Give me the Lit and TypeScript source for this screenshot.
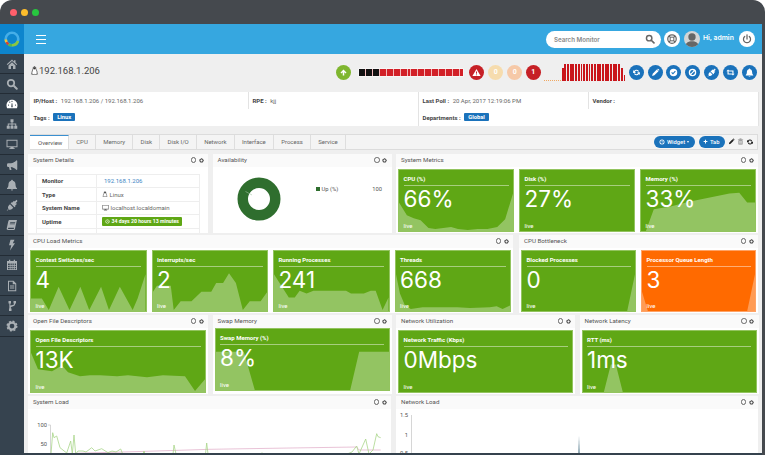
import { LitElement, html, css, svg } from 'lit';
import { customElement } from 'lit/decorators.js';

// Icons, all on a 24x24 box
const ICONS: Record<string, unknown> = {
  home: svg`<path d="M12 3 1.500 12.500 3 14l9-8 9 8 1.500-1.500-3.500-3.100V4.500h-3v2.300zM5 15v7h5v-6h4v6h5v-7l-7-6.300z"/>`,
  search: svg`<circle cx="10" cy="10" r="6.500" fill="none" stroke="currentColor" stroke-width="3.500"/><path d="M15 15l6.500 6.500" stroke="currentColor" stroke-width="4" stroke-linecap="round"/>`,
  gauge: svg`<path fill-rule="evenodd" d="M12 3.500C5.500 3.500 1 8.500 1 15c0 2 .5 3.800 1.300 5.500h19.400C22.500 18.800 23 17 23 15c0-6.500-4.500-11.500-11-11.500zM5 15.500a1.300 1.300 0 1 1 0-2.600 1.300 1.300 0 0 1 0 2.600zM7.500 9.500a1.300 1.300 0 1 1 0-2.600 1.300 1.300 0 0 1 0 2.600zM12 8a1.300 1.300 0 1 1 0-2.600A1.300 1.300 0 0 1 12 8zM19 15.500a1.300 1.300 0 1 1 0-2.600 1.300 1.300 0 0 1 0 2.600zM13.500 18.500h-3l.8-8h1.400z"/>`,
  sitemap: svg`<path d="M9 2.500h6v6h-2v2.500h7.500v4.500h2v6h-6v-6h2V13H13v2.500h2v6H9v-6h2V13H5.500v2.500h2v6h-6v-6h2V11H11V8.500H9z"/>`,
  desktop: svg`<path fill-rule="evenodd" d="M1 3.500h22v15h-8l.5 2h2v1.500h-11v-1.500h2l.5-2H1zM3 5.500v11h18v-11z"/>`,
  bullhorn: svg`<path d="M21 2.500c-3 3.500-7 5.500-11 6H4.500A2.500 2.500 0 0 0 2 11v2.500A2.500 2.500 0 0 0 4.500 16H6l1.500 6h3.500L9.500 16c4 .5 8.500 2.500 11.500 6 .7 0 1.500-.5 1.500-1.500V4c0-1-.8-1.500-1.500-1.500z"/>`,
  bell: svg`<path d="M12 1.500a1.800 1.800 0 0 0-1.700 2C7 4.300 5 7 5 10.500c0 5-1.500 6.500-3 8v1.500h20v-1.500c-1.500-1.500-3-3-3-8 0-3.500-2-6.200-5.300-7a1.800 1.800 0 0 0-1.700-2zM9.500 21a2.600 2.600 0 0 0 5 0z"/>`,
  plug: svg`<path d="M22.500 3 21 1.500 17.500 5l-1.500-1.500-4 4-.8-.8-2 2 7.800 7.800 2-2-.8-.8 4-4L19 8.500l3.500-3.500zM8 10.500l-2 2c-2.500 2.500-2.500 5.500-1 7.500L1.500 22.500 2.500 23.500 5 20.500c2 1.500 5 1.500 7.500-1l2-2z"/>`,
  book: svg`<path d="M7 2h15l-.8 3-3.500 15.500c-.2 1-1 1.500-2 1.500H4c-2 0-3-1.500-2.500-3.500L4.500 5C5 3 5.800 2 7 2zm1.500 4-.3 1.500h10L18.500 6zM7.800 9l-.3 1.500h10l.3-1.500zM4 18.500c-.2 1 .2 1.500 1 1.500h10.500l.5-2.500H5c-.6 0-.9.400-1 1z"/>`,
  bolt: svg`<path d="M9 1.500h8l-3.500 7H18L8 23l2.500-10.500H6z"/>`,
  calendar: svg`<path fill-rule="evenodd" d="M6 1.500h2.500V4h7V1.500H18V4h4v18H2V4h4zM4 9v3h3.500V9zm5 0v3h2.500V9zm4 0v3h2.500V9zm4.500 0v3H20V9zM4 13.500v3h3.500v-3zm5 0v3h2.500v-3zm4 0v3h2.500v-3zm4.500 0v3H20v-3zM4 18v2.500h3.500V18zm5 0v2.500h2.500V18zm4 0v2.500h2.500V18zm4.500 0v2.500H20V18z"/>`,
  file: svg`<path fill-rule="evenodd" d="M4 1.500h11l5.500 5.500v15.500H4zM6 3.500v17h12.500V8.500H13.500v-5zM8 11h8.500v2H8zM8 15h8.500v2H8z"/>`,
  branch: svg`<path d="M5 2h5v5H8.700v4.200c2.500-1.200 6-1 7.300-2.700V7h-1V2h5v5h-1.800v2c-1 3.800-6.500 4-8.500 5.500v2.500H11v5H6v-5h.7V7H5z"/>`,
  cog: svg`<circle cx="12" cy="12" r="7" fill="none" stroke="currentColor" stroke-width="4.500"/><circle cx="12" cy="12" r="9.500" fill="none" stroke="currentColor" stroke-width="3" stroke-dasharray="4 3.460"/>`,
  up: svg`<path d="M12 4 4 12l2.500 2.500 3.500-3.500v9h4v-9l3.500 3.500L20 12z"/>`,
  warn: svg`<path fill-rule="evenodd" d="M12 2.500 1 21.500h22zM10.500 9h3l-.4 6.500h-2.200zM10.500 17h3v2.500h-3z"/>`,
  sync: svg`<path d="M19 9.500A7.500 7.500 0 0 0 5.500 8L3 5.500V13h7.500L8 10.500a4.300 4.300 0 0 1 7.800-1zM5 14.500A7.500 7.500 0 0 0 18.500 16l2.500 2.500V11h-7.500L16 13.500a4.300 4.300 0 0 1-7.800 1z"/>`,
  pencil: svg`<path d="M3 21l1.500-6L15.500 4l4.500 4.500L9 19.500zM17 2.500a2 2 0 0 1 2.800 0l1.700 1.700a2 2 0 0 1 0 2.800L21 7.500 16.500 3z"/>`,
  check: svg`<path fill-rule="evenodd" d="M12 2a10 10 0 1 0 0 20 10 10 0 0 0 0-20zM10.500 17 6 12.500 8 10.500l2.500 2.500L16 7.500l2 2z"/>`,
  ban: svg`<path fill-rule="evenodd" d="M12 2a10 10 0 1 0 0 20 10 10 0 0 0 0-20zM6.800 15.200A6 6 0 0 1 15.200 6.800zM8.800 17.200 17.200 8.800A6 6 0 0 1 8.800 17.200z"/>`,
  retweet: svg`<path d="M1 8.500 5.500 4 10 8.500H7v6h8l2.500 3H4v-9zM23 15.500 18.500 20 14 15.500h3v-6H9L6.500 6.500H20v9z"/>`,
  power: svg`<path d="M12 2v10" stroke="currentColor" stroke-width="3" stroke-linecap="round" fill="none"/><path d="M6.500 6a8.500 8.500 0 1 0 11 0" stroke="currentColor" stroke-width="3" stroke-linecap="round" fill="none"/>`,
  buoy: svg`<circle cx="12" cy="12" r="8.500" fill="none" stroke="currentColor" stroke-width="2.500"/><circle cx="12" cy="12" r="4" fill="none" stroke="currentColor" stroke-width="2"/><path d="M6 6l3 3M18 6l-3 3M6 18l3-3M18 18l-3-3" stroke="currentColor" stroke-width="2.500"/>`,
  user: svg`<circle cx="12" cy="9" r="5.500"/><path d="M2 24c0-6 4.500-8.500 10-8.500S22 18 22 24z"/>`,
  trash: svg`<path fill-rule="evenodd" d="M9 2h6l1 2h5v2H3V4h5zM5 7.500h14V22H5zM7.500 10v9.500h2V10zm3.500 0v9.500h2V10zm3.500 0v9.500h2V10z"/>`,
  plus: svg`<path d="M9.500 3h5v6.500H21v5h-6.500V21h-5v-6.500H3v-5h6.500z"/>`,
  tux: svg`<path d="M12 1.500c-2.600 0-3.400 2.200-3.300 4.500.1 2.500-3.700 7-3.700 11 0 .8.200 1.500.6 2L3.500 21.500l4.500 1c1 .5 2.500.5 3.500 0h1c1 .5 2.500.5 3.500 0l4.500-1L18.400 19c.4-.5.6-1.200.6-2 0-4-3.800-8.500-3.700-11 .1-2.300-.7-4.500-3.300-4.500z" fill="#fff" stroke="#333" stroke-width="1.800"/><path d="M9 3.500h6v4l-3 2-3-2z" fill="#333"/>`,
  monitor: svg`<path fill-rule="evenodd" d="M1 3.500h22v15h-8l.5 2h2v1.500h-11v-1.500h2l.5-2H1zM3 5.500v11h18v-11z"/>`,
  clock: svg`<path fill-rule="evenodd" d="M12 2a10 10 0 1 0 0 20 10 10 0 0 0 0-20zm0 3a7 7 0 1 1 0 14 7 7 0 0 1 0-14zm-1 2v6h5v-2h-3V7z"/>`,
};

const SIDE_ITEMS = ['home', 'search', 'gauge', 'sitemap', 'desktop', 'bullhorn', 'bell', 'plug', 'book', 'bolt', 'calendar', 'file', 'branch', 'cog'];
const ACTIONS = ['sync', 'pencil', 'check', 'ban', 'plug', 'retweet', 'bell'];
const TABS = ['Overview', 'CPU', 'Memory', 'Disk', 'Disk I/O', 'Network', 'Interface', 'Process', 'Service'];

// uptime strip and poll sparkline in the page header
const STRIP = Array.from({ length: 30 }, (_, i) => i < 6);
const SPARK = [13, ...Array.from({ length: 21 }, () => 17), 13, 6];

// chart points: x, height from the bottom, on the tile's own box
type Pt = [number, number];

const CPU: Pt[] = [[0, 29], [8, 16], [15, 13], [22, 11], [30, 3], [37, 2], [45, 3], [53, 4], [60, 2], [70, 1], [80, 2], [90, 2], [100, 4], [108, 12], [116, 38]];
const MEMORY: Pt[] = [[5, 0], [13, 22], [30, 25], [50, 30], [70, 34], [90, 38], [100, 39], [108, 29], [116, 29]];
const SWITCHES: Pt[] = [[0, 13], [11, 13], [18, 1], [28, 25], [39, 1], [50, 25], [59, 1], [71, 25], [79, 1], [90, 25], [103, 1], [108, 13], [116, 38]];
const INTERRUPTS: Pt[] = [[0, 20], [4, 26], [18, 26], [21, 1], [28, 10], [39, 10], [49, 20], [59, 20], [64, 29], [71, 29], [77, 39], [84, 29], [91, 1], [98, 10], [109, 10], [116, 20]];
const RUNNING: Pt[] = [[0, 38], [15, 14], [21, 14], [26, 21], [33, 18], [40, 21], [73, 21], [78, 18], [91, 18], [98, 21], [103, 21], [110, 1], [116, 14]];
const THREADS: Pt[] = [[0, 38], [4, 18], [9, 6], [15, 2], [27, 4], [62, 4], [75, 3], [95, 4], [102, 5], [108, 2], [116, 6]];
const BLOCKED: Pt[] = [[0, 0], [108, 0], [116, 38]];
const QUEUE: Pt[] = [[0, 20], [6, 0], [108, 0], [116, 38]];
const FILES: Pt[] = [[0, 40], [7, 23], [21, 21], [31, 27], [37, 20], [49, 16], [59, 17], [69, 17], [86, 16], [97, 17], [116, 15], [132, 17], [154, 16], [164, 1], [174, 13]];
const SWAP: Pt[] = [[0, 39], [28, 39], [39, 0], [135, 0], [144, 39], [174, 39]];
const RTT: Pt[] = [[0, 0], [21, 0], [28, 28], [33, 28], [40, 0], [174, 0]];

// screen coordinates of the two load charts
const LOAD_GREEN = '51,453 52.700,431.700 54,436.700 56.700,435 60,446.700 66.700,452 70.700,440 72.300,453 74,434 75.700,453 78,450 83,450 86,451 91.700,446.700 95,450 101.700,447.700 108,451.700 112,450 116,451 120.700,448 122.700,453 143,453 144,450 145,453 173,453 174,444 176,453 205.500,453 206.700,442 208,453 261,453 262,451.700 263,453 347,453 352,451 356.700,445 359,453 365.700,438 369,453 373,449 376.700,432.700 378,435.700 380.700,436.700';
const LOAD_PINK = '75,452.300 140,450.500 210,448.300 290,447 356.700,446 359,449 380.700,449';

interface Tile {
  title: string;
  value: string;
  points?: Pt[];
  alert?: boolean;
}

interface Panel {
  title: string;
  tiles: Tile[];
  tight?: boolean;
}

function icon(name: string, size: number) {
  return html`<svg class="icon" style="width:${size}px;height:${size}px" viewBox="0 0 24 24" fill="currentColor">${ICONS[name]}</svg>`;
}

function areaPath(points: Pt[], w: number, h: number): string {
  const line = points.map(([x, y]) => `${x},${h - y}`).join(' ');
  return `${points[0][0]},${h} ${line} ${points[points.length - 1][0]},${h}`;
}

@customElement('app-root')
export class AppRoot extends LitElement {
  static styles = css`
    :host {
      display: block;
      width: 766px;
      height: 455px;
      overflow: hidden;
      background: #fff;
      font-family: Roboto, 'Liberation Sans', sans-serif;
      color: #555;
    }
    .icon { display: block; flex: none; }
    .window {
      box-sizing: border-box;
      width: 765px;
      height: 455px;
      padding: 0 3px 0 0;
      background: #45494e;
      border-radius: 12px 12px 0 0;
      display: flex;
      flex-direction: column;
      overflow: hidden;
    }
    .titlebar {
      flex: none;
      height: 24px;
      display: flex;
      align-items: center;
      gap: 4px;
      padding-left: 10px;
    }
    .dot { width: 7px; height: 7px; border-radius: 50%; }
    .frame { flex: 1; min-height: 0; display: flex; border-bottom: 2.500px solid #35424d; }

    .sidebar { flex: none; width: 24px; background: #36434f; display: flex; flex-direction: column; }
    .logo { flex: none; height: 30px; background: #0d85cd; display: flex; align-items: center; justify-content: center; }
    .side-item {
      flex: none;
      box-sizing: border-box;
      height: 20.200px;
      border-bottom: 1px solid #232c35;
      color: #a9afb4;
      display: flex;
      align-items: center;
      justify-content: center;
    }
    .side-item.on { color: #fff; }

    .main { flex: 1; min-width: 0; background: #efefef; display: flex; flex-direction: column; overflow: hidden; }
    .topbar { flex: none; height: 30px; background: #36a7e0; display: flex; align-items: center; padding: 0 7px 0 12px; color: #fff; }
    .burger { width: 10px; height: 7px; border-top: 1px solid #fff; border-bottom: 1px solid #fff; position: relative; }
    .burger::after { content: ''; position: absolute; left: 0; right: 0; top: 3px; height: 1px; background: #fff; }
    .search {
      box-sizing: border-box;
      width: 114.500px;
      height: 17px;
      margin-left: auto;
      border-radius: 9px;
      background: #fff;
      display: flex;
      align-items: center;
      justify-content: space-between;
      padding: 0 6px 0 8px;
      font: 600 6.200px Inter, 'Open Sans', sans-serif;
      color: #888;
    }
    .search .icon { color: #666; }
    .round-btn { width: 16px; height: 16px; border-radius: 50%; background: #fff; color: #666; display: flex; align-items: center; justify-content: center; flex: none; }
    .round-btn.buoy { margin-left: 3.500px; }
    .avatar { width: 16px; height: 16px; margin-left: 4px; border-radius: 50%; background: #d5d5d5; color: #666; overflow: hidden; flex: none; }
    .hi { margin-left: 3px; width: 36px; font: 600 6.800px Inter, 'Open Sans', sans-serif; align-self: flex-start; margin-top: 9px; white-space: nowrap; }

    .page-head { flex: none; height: 38px; display: flex; justify-content: space-between; padding: 0 5.500px 0 6px; }
    .host { display: flex; align-items: center; height: 14px; margin-top: 9px; font-size: 9.500px; color: #444; }
    .status { display: flex; align-items: center; height: 15px; margin-top: 10.500px; }
    .circle { width: 15px; height: 15px; border-radius: 50%; display: flex; align-items: center; justify-content: center; color: #fff; font-size: 7px; font-weight: 700; flex: none; }
    .circle.up { background: #7fb62f; }
    .circle.red { background: #c62026; }
    .circle.sand { background: #f6dcae; }
    .circle.peach { background: #f6c9a8; }
    .circle.blue { background: #1a72bb; margin-left: 3.800px; }
    .strip { display: flex; gap: .5px; width: 104px; height: 7px; margin: 0 6.500px 0 7.500px; background: #f3b9bb; box-shadow: 0 0 0 .5px #fff; flex: none; }
    .strip i { flex: 1; background: #d22027; }
    .strip i.off { background: #111; }
    .status .gap { margin-left: 4px; }
    .spark { box-sizing: border-box; width: 81px; height: 17px; margin: 0 3.500px; padding-left: 17.500px; display: flex; align-items: flex-end; gap: .85px; flex: none; position: relative; }
    .spark i { flex: 1; background: #c9151b; }
    .spark .zero { position: absolute; left: 0; bottom: 0; width: 17px; border-bottom: 1px dotted #f0a862; }

    .info { flex: none; margin: 0 3px 0 6px; display: grid; grid-template-columns: 218.500px 169.500px 169.500px 1fr; grid-auto-rows: 16.500px; gap: .5px; font-size: 6px; }
    .info > div { background: #fff; display: flex; align-items: center; gap: 3.500px; padding-left: 3.500px; border-right: .5px solid #e3e3e3; color: #666; }
    .info b { color: #444; font-weight: 700; }
    .info .wide { grid-column: span 2; }
    .tag { background: #1a72bb; color: #fff; font-weight: 700; padding: 1px 4px; border-radius: 1px; font-size: 5.800px; line-height: 6px; }

    .tabs { flex: none; height: 16px; margin: 8px 4px 4px 6px; display: flex; align-items: stretch; background: #f4f4f4; border: .5px solid #dcdcdc; border-left: 0; box-sizing: border-box; font-size: 6px; color: #666; }
    .tab { display: flex; align-items: center; padding: 0 7.200px; border-right: 1px solid #dedede; }
    .tab.on { background: #fff; border-top: 1.500px solid #3a8fd0; width: 39px; box-sizing: border-box; padding: 1px 0 0 8px; color: #555; }
    .tab-tools { margin-left: auto; display: flex; align-items: center; gap: 2px; padding-right: 3px; color: #222; }
    .pill { height: 12px; border-radius: 6px; background: #1a72bb; color: #fff; display: flex; align-items: center; justify-content: center; gap: 1.500px; font-size: 5.800px; font-weight: 500; }
    .pill.widget { width: 41px; margin-right: 2px; }
    .pill.add { width: 26px; margin-right: 1.500px; }
    .caret { width: 0; height: 0; border: 1.500px solid transparent; border-top: 2px solid #fff; border-bottom: 0; }

    .rows { flex: none; margin-left: 4px; width: 730px; display: flex; flex-direction: column; gap: 2px; }
    .row { display: grid; height: 79px; column-gap: 4px; }
    .row.r1 { grid-template-columns: 180px 179px 362px; column-gap: 4.500px; }
    .row.r2 { grid-template-columns: 485px 239px; height: 78px; column-gap: 6px; }
    .row.r3 { grid-template-columns: 180px 179px 179px 179px; column-gap: 4.500px; }
    .row.r4 { grid-template-columns: 363px 362px; height: 70px; column-gap: 5px; }

    .panel { background: #fff; min-width: 0; overflow: hidden; display: flex; flex-direction: column; }
    .panel-head { flex: none; height: 13px; box-sizing: border-box; background: #fafafa; display: flex; align-items: center; justify-content: space-between; padding: 0 4.500px 0 5px; font-size: 6.200px; font-weight: 400; color: #555; }
    .panel-tools { display: flex; align-items: center; gap: 2.500px; color: #333; }
    .ring { width: 3.500px; height: 3.500px; border: .8px solid #666; border-radius: 50%; }
    .tiles { flex: 1; display: flex; gap: 5px; padding: 2px 2px 1px; min-height: 0; }
    .tile {
      position: relative;
      flex: 1 1 0;
      min-width: 0;
      box-sizing: border-box;
      background: #5fa715;
      border: .5px solid #93c45f;
      color: #fff;
      display: flex;
      flex-direction: column;
      padding: 3px 4.500px 1px;
      overflow: hidden;
    }
    .tile.alert { background: #ff6a00; border-color: #ffa366; }
    .tile.tight { margin-top: -2px; margin-bottom: 2px; }
    .tile svg { position: absolute; left: 0; top: 0; width: 100%; height: 100%; }
    .tile-title, .tile-value, .tile-live { position: relative; }
    .tile-title { font-size: 6px; font-weight: 700; line-height: 12px; height: 12px; border-bottom: 1px solid rgba(255, 255, 255, .45); white-space: nowrap; }
    .tile-value { font: 400 22.500px/23px Inter, 'Open Sans', sans-serif; margin-top: 1px; }
    .tile-live { margin-top: auto; font-size: 6px; line-height: 8px; }

    .details { margin: 7px 8px 0; border: 1px solid #eee; border-bottom: 0; font-size: 6px; }
    .details div { display: grid; grid-template-columns: 60px 1fr; height: 13.500px; box-sizing: border-box; border-bottom: 1px solid #eee; align-items: center; }
    .details b { padding-left: 5px; color: #444; font-weight: 700; border-right: 1px solid #eee; height: 100%; display: flex; align-items: center; }
    .details span { padding-left: 5px; display: flex; align-items: center; gap: 1.500px; color: #666; }
    .details .link { color: #3e86c4; padding-left: 7px; }
    .details .uptime { background: #5fa715; color: #fff; font-weight: 700; padding: 1px 3px; border-radius: 1px; line-height: 7px; font-size: 5.200px; white-space: nowrap; }
    .details .up-cell { padding-left: 5px; }

    .avail { flex: 1; display: flex; min-height: 0; }
    .avail svg { flex: none; width: 48px; height: 48px; margin: 8.500px 0 0 22.500px; }
    .legend { display: flex; align-items: center; height: 8px; margin: 18.500px 0 0 33px; width: 66px; font-size: 5.800px; color: #555; }
    .legend i { width: 3.500px; height: 3.500px; background: #2f6e2e; margin-right: 2px; }
    .legend em { font-style: normal; margin-left: auto; }

    .chart { display: block; width: 100%; flex: 1; min-height: 0; }
  `;

  private renderTile(t: Tile, tight = false) {
    const w = t.points ? t.points[t.points.length - 1][0] : 0;
    return html`
      <div class="tile ${t.alert ? 'alert' : ''} ${tight ? 'tight' : ''}">
        ${t.points ? svg`<svg viewBox="0 0 ${w} 62" preserveAspectRatio="none"><polygon points=${areaPath(t.points, w, 62)} fill="rgba(255,255,255,.33)"/></svg>` : ''}
        <div class="tile-title">${t.title}</div>
        <div class="tile-value">${t.value}</div>
        <div class="tile-live">live</div>
      </div>
    `;
  }

  private renderHead(title: string) {
    return html`
      <div class="panel-head">
        <span>${title}</span>
        <span class="panel-tools"><i class="ring"></i>${icon('cog', 5)}</span>
      </div>
    `;
  }

  private renderTilePanel(p: Panel) {
    return html`
      <section class="panel">
        ${this.renderHead(p.title)}
        <div class="tiles">${p.tiles.map(t => this.renderTile(t, p.tight))}</div>
      </section>
    `;
  }

  render() {
    return html`
      <div class="window">
        <div class="titlebar">
          <span class="dot" style="background:#ff5f6b"></span>
          <span class="dot" style="background:#fdbd2c"></span>
          <span class="dot" style="background:#27c63f"></span>
        </div>
        <div class="frame">
          <nav class="sidebar">
            <div class="logo">
              <svg width="18" height="18" viewBox="0 0 18 18" fill="none" stroke-width="2.600">
                <circle cx="9" cy="9" r="6.300" stroke="#45aee8"/>
                <path d="M15 11a6.300 6.300 0 0 1-6 4.300" stroke="#8cc63f"/>
                <path d="M9 15.300a6.300 6.300 0 0 1-3.500-1" stroke="#57b74a"/>
                <path d="M5.500 14.300a6.300 6.300 0 0 1-2-2.300" stroke="#d8432f"/>
                <path d="M3.500 12a6.300 6.300 0 0 1-.7-2.500" stroke="#f2c230"/>
              </svg>
            </div>
            ${SIDE_ITEMS.map(n => html`<div class="side-item ${n === 'gauge' ? 'on' : ''}">${icon(n, 12)}</div>`)}
          </nav>
          <div class="main">
            <header class="topbar">
              <div class="burger"></div>
              <div class="search"><span>Search Monitor</span>${icon('search', 10)}</div>
              <div class="round-btn buoy">${icon('buoy', 12)}</div>
              <div class="avatar">${icon('user', 16)}</div>
              <div class="hi">Hi, admin</div>
              <div class="round-btn">${icon('power', 10)}</div>
            </header>

            <div class="page-head">
              <div class="host">${icon('tux', 9)}<span>192.168.1.206</span></div>
              <div class="status">
                <div class="circle up">${icon('up', 9)}</div>
                <div class="strip">${STRIP.map(off => html`<i class=${off ? 'off' : ''}></i>`)}</div>
                <div class="circle red">${icon('warn', 9)}</div>
                <div class="circle sand gap">0</div>
                <div class="circle peach gap">0</div>
                <div class="circle red" style="margin-left:3.500px">1</div>
                <div class="spark">
                  <span class="zero"></span>
                  ${SPARK.map(h => html`<i style="height:${h}px"></i>`)}
                </div>
                ${ACTIONS.map((a, i) => html`<div class="circle blue" style=${i === 0 ? 'margin-left:0' : ''}>${icon(a, 9)}</div>`)}
              </div>
            </div>

            <div class="info">
              <div><b>IP/Host :</b> 192.168.1.206 / 192.168.1.206</div>
              <div><b>RPE :</b> kjj</div>
              <div><b>Last Poll :</b> 20 Apr, 2017 12:19:06 PM</div>
              <div><b>Vendor :</b></div>
              <div class="wide"><b>Tags :</b> <span class="tag">Linux</span></div>
              <div class="wide"><b>Departments :</b> <span class="tag">Global</span></div>
            </div>

            <div class="tabs">
              ${TABS.map((t, i) => html`<div class="tab ${i === 0 ? 'on' : ''}">${t}</div>`)}
              <div class="tab-tools">
                <div class="pill widget">${icon('clock', 6)}Widget<span class="caret"></span></div>
                <div class="pill add">${icon('plus', 5)}Tab</div>
                ${icon('pencil', 7)}
                <span style="color:#888">${icon('trash', 7)}</span>
                ${icon('sync', 8)}
              </div>
            </div>

            <div class="rows">
              <div class="row r1">
                <section class="panel">
                  ${this.renderHead('System Details')}
                  <div class="details">
                    <div><b>Monitor</b><span class="link">192.168.1.206</span></div>
                    <div><b>Type</b><span>${icon('tux', 6)} Linux</span></div>
                    <div><b>System Name</b><span>${icon('monitor', 7)} localhost.localdomain</span></div>
                    <div><b>Uptime</b><span class="up-cell"><span class="uptime">${icon('clock', 5)} 34 days 20 hours 13 minutes</span></span></div>
                    <div><b></b><span></span></div>
                  </div>
                </section>
                <section class="panel">
                  ${this.renderHead('Availability')}
                  <div class="avail">
                    <svg viewBox="0 0 48 48">
                      <circle cx="24" cy="24" r="16.250" fill="none" stroke="#2f6e2e" stroke-width="10.500"/>
                      <path d="M10.500 16.500 17 20" stroke="#a5c4a4" stroke-width=".6"/>
                    </svg>
                    <div class="legend"><i></i>Up (%)<em>100</em></div>
                  </div>
                </section>
                ${this.renderTilePanel({
                  title: 'System Metrics',
                  tiles: [
                    { title: 'CPU (%)', value: '66%', points: CPU },
                    { title: 'Disk (%)', value: '27%' },
                    { title: 'Memory (%)', value: '33%', points: MEMORY },
                  ],
                })}
              </div>

              <div class="row r2">
                ${this.renderTilePanel({
                  title: 'CPU Load Metrics',
                  tiles: [
                    { title: 'Context Switches/sec', value: '4', points: SWITCHES },
                    { title: 'Interrupts/sec', value: '2', points: INTERRUPTS },
                    { title: 'Running Processes', value: '241', points: RUNNING },
                    { title: 'Threads', value: '668', points: THREADS },
                  ],
                })}
                ${this.renderTilePanel({
                  title: 'CPU Bottleneck',
                  tiles: [
                    { title: 'Blocked Processes', value: '0', points: BLOCKED },
                    { title: 'Processor Queue Length', value: '3', points: QUEUE, alert: true },
                  ],
                })}
              </div>

              <div class="row r3">
                ${this.renderTilePanel({ title: 'Open File Descriptors', tiles: [{ title: 'Open File Descriptors', value: '13K', points: FILES }] })}
                ${this.renderTilePanel({ title: 'Swap Memory', tight: true, tiles: [{ title: 'Swap Memory (%)', value: '8%', points: SWAP }] })}
                ${this.renderTilePanel({ title: 'Network Utilization', tiles: [{ title: 'Network Traffic (Kbps)', value: '0Mbps' }] })}
                ${this.renderTilePanel({ title: 'Network Latency', tiles: [{ title: 'RTT (ms)', value: '1ms', points: RTT }] })}
              </div>

              <div class="row r4">
                <section class="panel">
                  ${this.renderHead('System Load')}
                  <svg class="chart" viewBox="28 408 363 57" preserveAspectRatio="xMinYMin slice">
                    <path d="M48 424H50.500V455" fill="none" stroke="#ccc" stroke-width=".8"/>
                    <text x="47" y="425.500" text-anchor="end" font-size="5.800" fill="#555">100</text>
                    <text x="47" y="445" text-anchor="end" font-size="5.800" fill="#555">50</text>
                    <polyline points=${LOAD_PINK} fill="none" stroke="#e6bcd3" stroke-width=".9"/>
                    <polyline points=${LOAD_GREEN} fill="none" stroke="#a9d68a" stroke-width=".8"/>
                  </svg>
                </section>
                <section class="panel">
                  ${this.renderHead('Network Load')}
                  <svg class="chart" viewBox="396 408 362 57" preserveAspectRatio="xMinYMin slice">
                    <path d="M411.500 414V460" fill="none" stroke="#ccc" stroke-width=".8"/>
                    <text x="408" y="416" text-anchor="end" font-size="5.800" fill="#555">1.5</text>
                    <text x="408" y="436" text-anchor="end" font-size="5.800" fill="#555">1</text>
                    <text x="408" y="454" text-anchor="end" font-size="5.800" fill="#555">0.5</text>
                    <path d="M579 435 580.200 460H577.800z" fill="#7d9aa8"/>
                  </svg>
                </section>
              </div>
            </div>
          </div>
        </div>
      </div>
    `;
  }
}

declare global {
  interface HTMLElementTagNameMap {
    'app-root': AppRoot;
  }
}
